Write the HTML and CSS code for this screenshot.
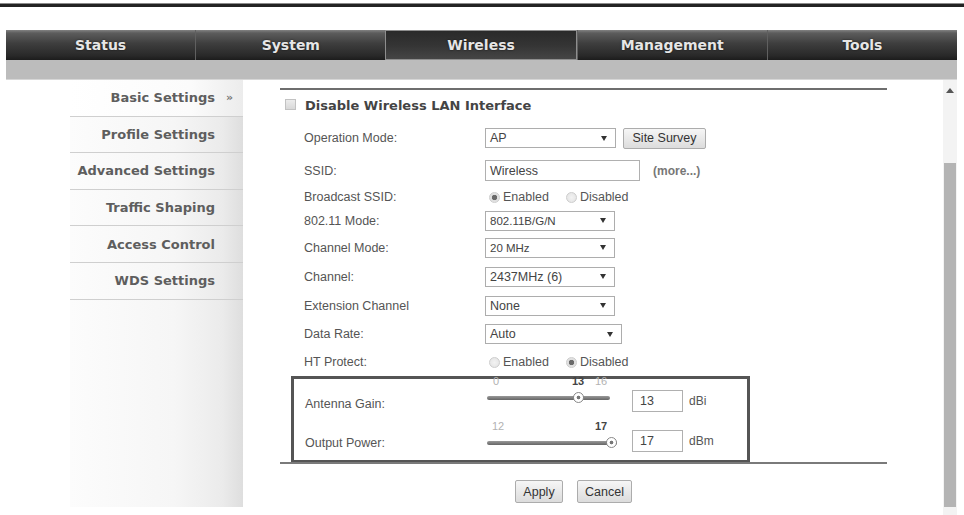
FILE: index.html
```html
<!DOCTYPE html>
<html>
<head>
<meta charset="utf-8">
<title>Wireless Basic Settings</title>
<link rel="stylesheet" href="styles.css">
</head>
<body>
<div class="topline"></div>
<div class="frame">
  <nav class="tabs">
    <div class="tab">Status</div>
    <div class="tab">System</div>
    <div class="tab active">Wireless</div>
    <div class="tab">Management</div>
    <div class="tab">Tools</div>
  </nav>
  <div class="subbar"></div>
  <div class="content">
    <aside class="side">
      <ul class="menu">
        <li class="item current">Basic Settings<span class="mark">&raquo;</span></li>
        <li class="item">Profile Settings</li>
        <li class="item">Advanced Settings</li>
        <li class="item">Traffic Shaping</li>
        <li class="item">Access Control</li>
        <li class="item">WDS Settings</li>
      </ul>
    </aside>
    <main class="main">
      <div class="rule"></div>
      <div class="row r-check"><span class="checkbox"></span><span class="title">Disable Wireless LAN Interface</span></div>
      <div class="row r-op">
        <span class="lbl">Operation Mode:</span>
        <div class="select w131"><span>AP</span><span class="arrow"></span></div>
        <button class="btn survey">Site Survey</button>
      </div>
      <div class="row r-ssid">
        <span class="lbl">SSID:</span>
        <div class="input ssid">Wireless</div>
        <span class="more">(more...)</span>
      </div>
      <div class="row r-bc">
        <span class="lbl">Broadcast SSID:</span>
        <span class="radio on"></span><span class="rtext">Enabled</span>
        <span class="radio"></span><span class="rtext">Disabled</span>
      </div>
      <div class="row r-mode">
        <span class="lbl">802.11 Mode:</span>
        <div class="select w130 small"><span>802.11B/G/N</span><span class="arrow"></span></div>
      </div>
      <div class="row">
        <span class="lbl">Channel Mode:</span>
        <div class="select w130 small"><span>20 MHz</span><span class="arrow"></span></div>
      </div>
      <div class="row">
        <span class="lbl">Channel:</span>
        <div class="select w130"><span>2437MHz (6)</span><span class="arrow"></span></div>
      </div>
      <div class="row">
        <span class="lbl">Extension Channel</span>
        <div class="select w130"><span>None</span><span class="arrow"></span></div>
      </div>
      <div class="row r-dr">
        <span class="lbl">Data Rate:</span>
        <div class="select w137"><span>Auto</span><span class="arrow"></span></div>
      </div>
      <div class="row r-ht">
        <span class="lbl">HT Protect:</span>
        <span class="radio"></span><span class="rtext">Enabled</span>
        <span class="radio on"></span><span class="rtext">Disabled</span>
      </div>
      <div class="box">
        <div class="brow b1">
          <span class="blbl">Antenna Gain:</span>
          <div class="slider s1">
            <span class="tick" style="left:6px">0</span>
            <span class="tick cur" style="left:85px">13</span>
            <span class="tick" style="left:108px">16</span>
            <div class="track" style="width:123px"></div>
            <span class="thumb" style="left:86px"></span>
          </div>
          <div class="input num">13</div>
          <span class="unit">dBi</span>
        </div>
        <div class="brow b2">
          <span class="blbl">Output Power:</span>
          <div class="slider s2">
            <span class="tick" style="left:5px">12</span>
            <span class="tick cur" style="left:108px">17</span>
            <div class="track" style="width:130px"></div>
            <span class="thumb" style="left:119px"></span>
          </div>
          <div class="input num">17</div>
          <span class="unit">dBm</span>
        </div>
      </div>
      <div class="rule bottom"></div>
      <div class="actions">
        <button class="btn apply">Apply</button>
        <button class="btn cancel">Cancel</button>
      </div>
    </main>
    <div class="scroll">
      <div class="sc-up"><svg width="8" height="5" viewBox="0 0 8 5"><path d="M0 5 L4 0 L8 5 Z" fill="#555"/></svg></div>
      <div class="sc-gap"></div>
      <div class="sc-thumb"></div>
    </div>
  </div>
</div>
</body>
</html>
```

FILE: styles.css
```css
* { box-sizing: border-box; }
html, body { margin: 0; padding: 0; background: #fff; }
body {
  width: 964px;
  height: 515px;
  overflow: hidden;
  font-family: "Liberation Sans", Arial, sans-serif;
  color: #555;
}

.topline {
  margin-top: 3px;
  height: 4px;
  background: #232323;
  border-top: 1px solid #8c8c8c;
}

.frame { margin: 23px 7px 0 6px; }

.tabs {
  display: flex;
  height: 30px;
  background: linear-gradient(#828282 0, #5c5c5c 10%, #3e3e3e 45%, #292929 85%, #1c1c1c 100%);
}
.tab {
  flex: 1;
  display: flex;
  align-items: center;
  justify-content: center;
  font-family: "DejaVu Sans", sans-serif;
  font-weight: bold;
  font-size: 14px;
  color: #e6e6e6;
  text-shadow: 0 0 2px rgba(0,0,0,0.7);
  border-left: 1px solid #606060;
}
.tab:first-child { border-left: 0; }
.tab.active {
  background: linear-gradient(#2a2a2a, #343434 50%, #454545);
  border: 1px solid #8e8e8e;
}

.subbar {
  height: 20px;
  background: #bcbcbc;
  border-bottom: 1px solid #d6d6d6;
}

.content { display: flex; height: 435px; }

/* sidebar */
.side { width: 237px; padding-left: 64px; }
.menu {
  list-style: none;
  margin: 0;
  padding: 0;
  height: 427px;
  background: linear-gradient(to right, #fcfcfc 0, #f6f6f6 60%, #ebebeb 88%, #dedede 100%);
}
.item {
  height: 36.6px;
  display: flex;
  align-items: center;
  justify-content: flex-end;
  padding-right: 28px;
  border-bottom: 1px solid #cfcfcf;
  font-family: "DejaVu Sans", sans-serif;
  font-weight: bold;
  font-size: 13px;
  color: #5e5e5e;
}
.item.current { padding-right: 7px; background: linear-gradient(to right, #fff 0, #fbfbfb 70%, #ececec 100%); }
.mark {
  width: 10px;
  margin-left: 11px;
  font-size: 11px;
  color: #777;
}

/* main */
.main { width: 607px; margin-left: 37px; }
.rule { height: 2px; background: #6e6e6e; margin-top: 8px; }
.rule.bottom { margin-top: 0; background: #7a7a7a; }

.row { display: flex; align-items: center; padding-left: 24px; height: 29px; }
.r-check { height: 31px; padding-left: 5px; }
.r-op { height: 34px; }
.r-ssid { height: 31px; }
.r-bc { height: 22px; }
.r-mode { height: 25px; }
.r-dr, .r-ht { height: 28px; }

.checkbox {
  width: 11px;
  height: 11px;
  border: 1px solid #c2c2c2;
  background: linear-gradient(#ececec, #d8d8d8);
  margin-right: 9px;
  margin-top: -2px;
}
.title {
  font-family: "DejaVu Sans", sans-serif;
  font-weight: bold;
  font-size: 13px;
  color: #444;
}

.lbl { width: 181px; font-size: 12.5px; color: #555; }

.select {
  height: 20px;
  border: 1px solid #adadad;
  background: #fff;
  display: flex;
  align-items: center;
  justify-content: space-between;
  padding: 0 8px 0 4px;
  font-size: 12.5px;
  color: #444;
}
.select.small { font-size: 11.5px; }
.w130 { width: 130px; }
.w131 { width: 131px; }
.w137 { width: 137px; }
.arrow {
  width: 0;
  height: 0;
  border-left: 3px solid transparent;
  border-right: 3px solid transparent;
  border-top: 5px solid #333;
}

.btn {
  font-family: "Liberation Sans", Arial, sans-serif;
  font-size: 12.5px;
  color: #333;
  background: linear-gradient(#f6f6f6, #dcdcdc);
  border: 1px solid #acacac;
  border-radius: 2px;
  padding: 0;
  height: 22px;
}
.survey { width: 83px; height: 21px; margin-left: 7px; }

.input {
  height: 21px;
  border: 1px solid #b0b0b0;
  background: #fff;
  display: flex;
  align-items: center;
  padding-left: 4px;
  font-size: 12.5px;
  color: #444;
}
.ssid { width: 155px; }
.more {
  margin-left: 13px;
  font-weight: bold;
  font-size: 12px;
  color: #777;
}

.radio {
  width: 11px;
  height: 11px;
  border-radius: 50%;
  border: 1px solid #cdcdcd;
  background: radial-gradient(circle, #f2f2f2 0, #e2e2e2 100%);
  margin-left: 4px;
  margin-right: 3px;
}
.radio.on { background: radial-gradient(circle, #6a6a6a 0, #6a6a6a 2.4px, #dedede 3px, #e8e8e8 100%); }
.rtext { font-size: 12.5px; color: #555; margin-right: 13px; }

/* slider box */
.box {
  margin-left: 11px;
  width: 459px;
  height: 86px;
  border: 3px solid #555;
  border-bottom-width: 2px;
  padding-left: 11px;
}
.brow { display: flex; align-items: center; }
.b1 { height: 43px; }
.b2 { height: 37px; }
.blbl { width: 182px; font-size: 12.5px; color: #555; }
.b1 .blbl { margin-top: 6px; }
.b2 .blbl { margin-top: 5px; }
.slider { position: relative; width: 136px; height: 12px; margin-right: 9px; }
.s1 { margin-top: -5px; }
.s2 { margin-top: 5px; }
.track {
  margin-top: 4px;
  height: 4px;
  border-radius: 2px;
  background: linear-gradient(#999, #666);
}
.thumb {
  position: absolute;
  top: 0;
  width: 11px;
  height: 11px;
  border-radius: 50%;
  border: 1px solid #888;
  background: radial-gradient(circle, #777 0, #777 1.5px, #fff 2.2px);
}
.tick {
  position: absolute;
  top: -17px;
  font-size: 11px;
  line-height: 12px;
  color: #b2b2b2;
}
.tick.cur { font-weight: bold; color: #444; }
.num { width: 51px; height: 22px; padding-left: 7px; }
.unit { margin-left: 6px; font-size: 12px; color: #555; }

.actions { display: flex; gap: 14px; padding-left: 235px; margin-top: 16px; }
.apply { width: 48px; height: 23px; }
.cancel { width: 55px; height: 23px; }

/* scrollbar */
.scroll {
  margin-left: auto;
  width: 14px;
  background: #f3f3f3;
  display: flex;
  flex-direction: column;
  align-items: center;
}
.sc-up { height: 20px; display: flex; align-items: center; }
.sc-gap { height: 63px; }
.sc-thumb { width: 12px; height: 344px; background: #b4b4b4; }
```
